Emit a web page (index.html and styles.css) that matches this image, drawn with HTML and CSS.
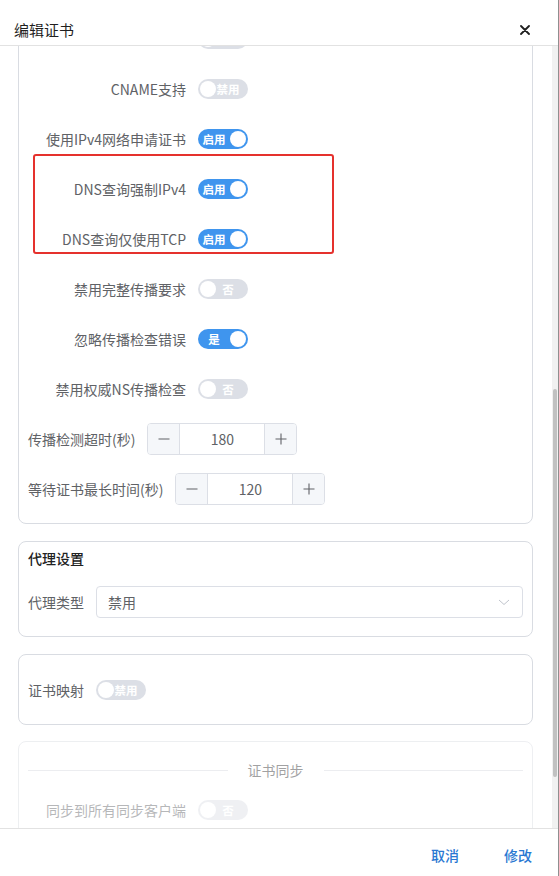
FILE: index.html
```html
<!DOCTYPE html>
<html lang="zh-CN">
<head>
<meta charset="utf-8">
<title>编辑证书</title>
<link rel="stylesheet" href="styles.css">
</head>
<body>
<div class="dialog">
  <div class="dlg-header">
    <span class="dlg-title">编辑证书</span>
    <span class="dlg-close"><svg width="10" height="10" viewBox="0 0 10 10"><path d="M1 1L9 9M9 1L1 9" stroke="#1f1f1f" stroke-width="1.8" stroke-linecap="round"/></svg></span>
  </div>
  <div class="dlg-body">
    <div class="dlg-content">
      <section class="card card-main">
        <div class="form-item"><span class="item-label fixed"></span><span class="switch off"><span class="knob"></span><span class="sw-text"></span></span></div>
        <div class="form-item"><span class="item-label fixed">CNAME支持</span><span class="switch off"><span class="knob"></span><span class="sw-text">禁用</span></span></div>
        <div class="form-item"><span class="item-label fixed">使用IPv4网络申请证书</span><span class="switch on"><span class="sw-text">启用</span><span class="knob"></span></span></div>
        <div class="highlight">
          <div class="form-item"><span class="item-label fixed">DNS查询强制IPv4</span><span class="switch on"><span class="sw-text">启用</span><span class="knob"></span></span></div>
          <div class="form-item"><span class="item-label fixed">DNS查询仅使用TCP</span><span class="switch on"><span class="sw-text">启用</span><span class="knob"></span></span></div>
        </div>
        <div class="form-item"><span class="item-label fixed">禁用完整传播要求</span><span class="switch off"><span class="knob"></span><span class="sw-text">否</span></span></div>
        <div class="form-item"><span class="item-label fixed">忽略传播检查错误</span><span class="switch on"><span class="sw-text">是</span><span class="knob"></span></span></div>
        <div class="form-item"><span class="item-label fixed">禁用权威NS传播检查</span><span class="switch off"><span class="knob"></span><span class="sw-text">否</span></span></div>
        <div class="form-item"><span class="item-label">传播检测超时(秒)</span>
          <div class="num-input">
            <span class="num-btn minus"><svg width="12" height="12" viewBox="0 0 12 12"><path d="M0.5 6H11.5" stroke="#606266" stroke-width="1.1"/></svg></span>
            <span class="num-value">180</span>
            <span class="num-btn plus"><svg width="12" height="12" viewBox="0 0 12 12"><path d="M0.5 6H11.5M6 0.5V11.5" stroke="#606266" stroke-width="1.1"/></svg></span>
          </div>
        </div>
        <div class="form-item"><span class="item-label">等待证书最长时间(秒)</span>
          <div class="num-input">
            <span class="num-btn minus"><svg width="12" height="12" viewBox="0 0 12 12"><path d="M0.5 6H11.5" stroke="#606266" stroke-width="1.1"/></svg></span>
            <span class="num-value">120</span>
            <span class="num-btn plus"><svg width="12" height="12" viewBox="0 0 12 12"><path d="M0.5 6H11.5M6 0.5V11.5" stroke="#606266" stroke-width="1.1"/></svg></span>
          </div>
        </div>
      </section>

      <section class="card card-proxy">
        <div class="card-title">代理设置</div>
        <div class="form-item"><span class="item-label">代理类型</span>
          <div class="select">
            <span class="select-value">禁用</span>
            <svg class="chevron" width="12" height="12" viewBox="0 0 12 12"><path d="M1 4L6 8.5L11 4" fill="none" stroke="#c0c4cc" stroke-width="1"/></svg>
          </div>
        </div>
      </section>

      <section class="card card-map">
        <div class="form-item"><span class="item-label">证书映射</span><span class="switch off"><span class="knob"></span><span class="sw-text">禁用</span></span></div>
      </section>

      <section class="card card-sync">
        <div class="divider"><span class="divider-line"></span><span class="divider-text">证书同步</span><span class="divider-line"></span></div>
        <div class="form-item"><span class="item-label fixed">同步到所有同步客户端</span><span class="switch off"><span class="knob"></span><span class="sw-text">否</span></span></div>
      </section>
    </div>
    <div class="scroll-track"><div class="scroll-thumb"></div></div>
  </div>
  <div class="dlg-footer">
    <button class="txt-btn">取消</button>
    <button class="txt-btn">修改</button>
  </div>
</div>
</body>
</html>
```

FILE: styles.css
```css
* { box-sizing: border-box; }
html, body { margin: 0; padding: 0; background: #fff; }
body {
  font-family: "Noto Sans CJK SC", "Noto Sans", sans-serif;
  font-size: 14px;
  color: #606266;
}
.dialog {
  width: 559px;
  height: 876px;
  display: flex;
  flex-direction: column;
  border-right: 1px solid #8f8f8f;
  background: #fff;
}
.dlg-header {
  height: 46px;
  flex: none;
  padding: 14px 28px 0 14px;
  display: flex;
  align-items: center;
  justify-content: space-between;
  border-bottom: 1px solid #e2e2e2;
}
.dlg-title { font-size: 15px; color: #1f1f1f; line-height: 22px; }
.dlg-close { display: flex; align-items: center; }

.dlg-body {
  flex: 1;
  overflow: hidden;
  position: relative;
}
.dlg-content {
  padding: 0 25px 0 18px;
}
.card {
  border: 1px solid #d9dce2;
  border-radius: 8px;
  padding: 0 9px;
  display: flex;
  flex-direction: column;
}
.card-main { margin-top: -24px; }
.card-proxy { margin-top: 17px; padding-top: 5px; }
.card-map { margin-top: 17px; padding-top: 19px; }
.card-sync { margin-top: 16px; padding-top: 17px; opacity: 0.45; }

.form-item {
  height: 32px;
  margin-bottom: 18px;
  display: flex;
  align-items: center;
  flex: none;
}
.item-label {
  line-height: 32px;
  padding-right: 12px;
  white-space: nowrap;
  color: #606266;
}
.item-label.fixed {
  width: 170px;
  flex: none;
  text-align: right;
}
.highlight { position: relative; display: flex; flex-direction: column; }
.highlight::after {
  content: "";
  position: absolute;
  left: 5px;
  width: 297px;
  top: -19px;
  bottom: 19px;
  border: 2px solid #e5312d;
  border-radius: 3px;
  pointer-events: none;
}

.switch {
  width: 50px;
  height: 20px;
  border-radius: 10px;
  padding: 0 2px;
  display: inline-flex;
  align-items: center;
  flex: none;
}
.switch.on { background: #3f95ee; }
.switch.off { background: #dcdfe6; }
.knob {
  width: 16px;
  height: 16px;
  border-radius: 50%;
  background: #fff;
  flex: none;
}
.sw-text {
  flex: 1;
  text-align: center;
  color: #fff;
  font-size: 11.5px;
  font-weight: 700;
  line-height: 20px;
}
.switch.on .sw-text { padding: 0 4px 0 2px; }
.switch.off .sw-text { padding: 0 6px 0 0; }

.num-input {
  width: 150px;
  height: 32px;
  border: 1px solid #dcdfe6;
  border-radius: 4px;
  display: flex;
  overflow: hidden;
  background: #fff;
}
.num-btn {
  width: 32px;
  flex: none;
  background: #f5f7fa;
  display: flex;
  align-items: center;
  justify-content: center;
}
.num-btn.minus { border-right: 1px solid #dcdfe6; }
.num-btn.plus { border-left: 1px solid #dcdfe6; }
.num-value {
  flex: 1;
  text-align: center;
  line-height: 30px;
  color: #606266;
}

.card-title {
  line-height: 22px;
  font-size: 14px;
  font-weight: 500;
  color: #222;
  margin-bottom: 17px;
}
.select {
  flex: 1;
  height: 32px;
  border: 1px solid #dcdfe6;
  border-radius: 4px;
  padding: 0 12px 0 11px;
  display: flex;
  align-items: center;
  justify-content: space-between;
}
.select-value { color: #606266; }

.divider {
  display: flex;
  align-items: center;
  height: 22px;
  margin-bottom: 13px;
}
.divider-line { flex: 1; height: 1px; background: #d6d9df; }
.divider-text { padding: 0 20px; color: #303133; line-height: 22px; }

.scroll-track {
  position: absolute;
  top: 0;
  right: 0;
  bottom: 0;
  width: 6px;
  background: #f1f1f1;
}
.scroll-thumb {
  position: absolute;
  left: 1px;
  top: 343px;
  width: 4px;
  height: 388px;
  border-radius: 2px;
  background: #c1c1c1;
}

.dlg-footer {
  height: 48px;
  flex: none;
  border-top: 1px solid #e2e2e2;
  display: flex;
  justify-content: flex-end;
  align-items: center;
  gap: 45px;
  padding: 4px 26px 0 0;
}
.txt-btn {
  border: none;
  background: none;
  padding: 0;
  font-family: inherit;
  font-size: 14px;
  font-weight: 500;
  color: #2a78d2;
  line-height: 20px;
}
```
